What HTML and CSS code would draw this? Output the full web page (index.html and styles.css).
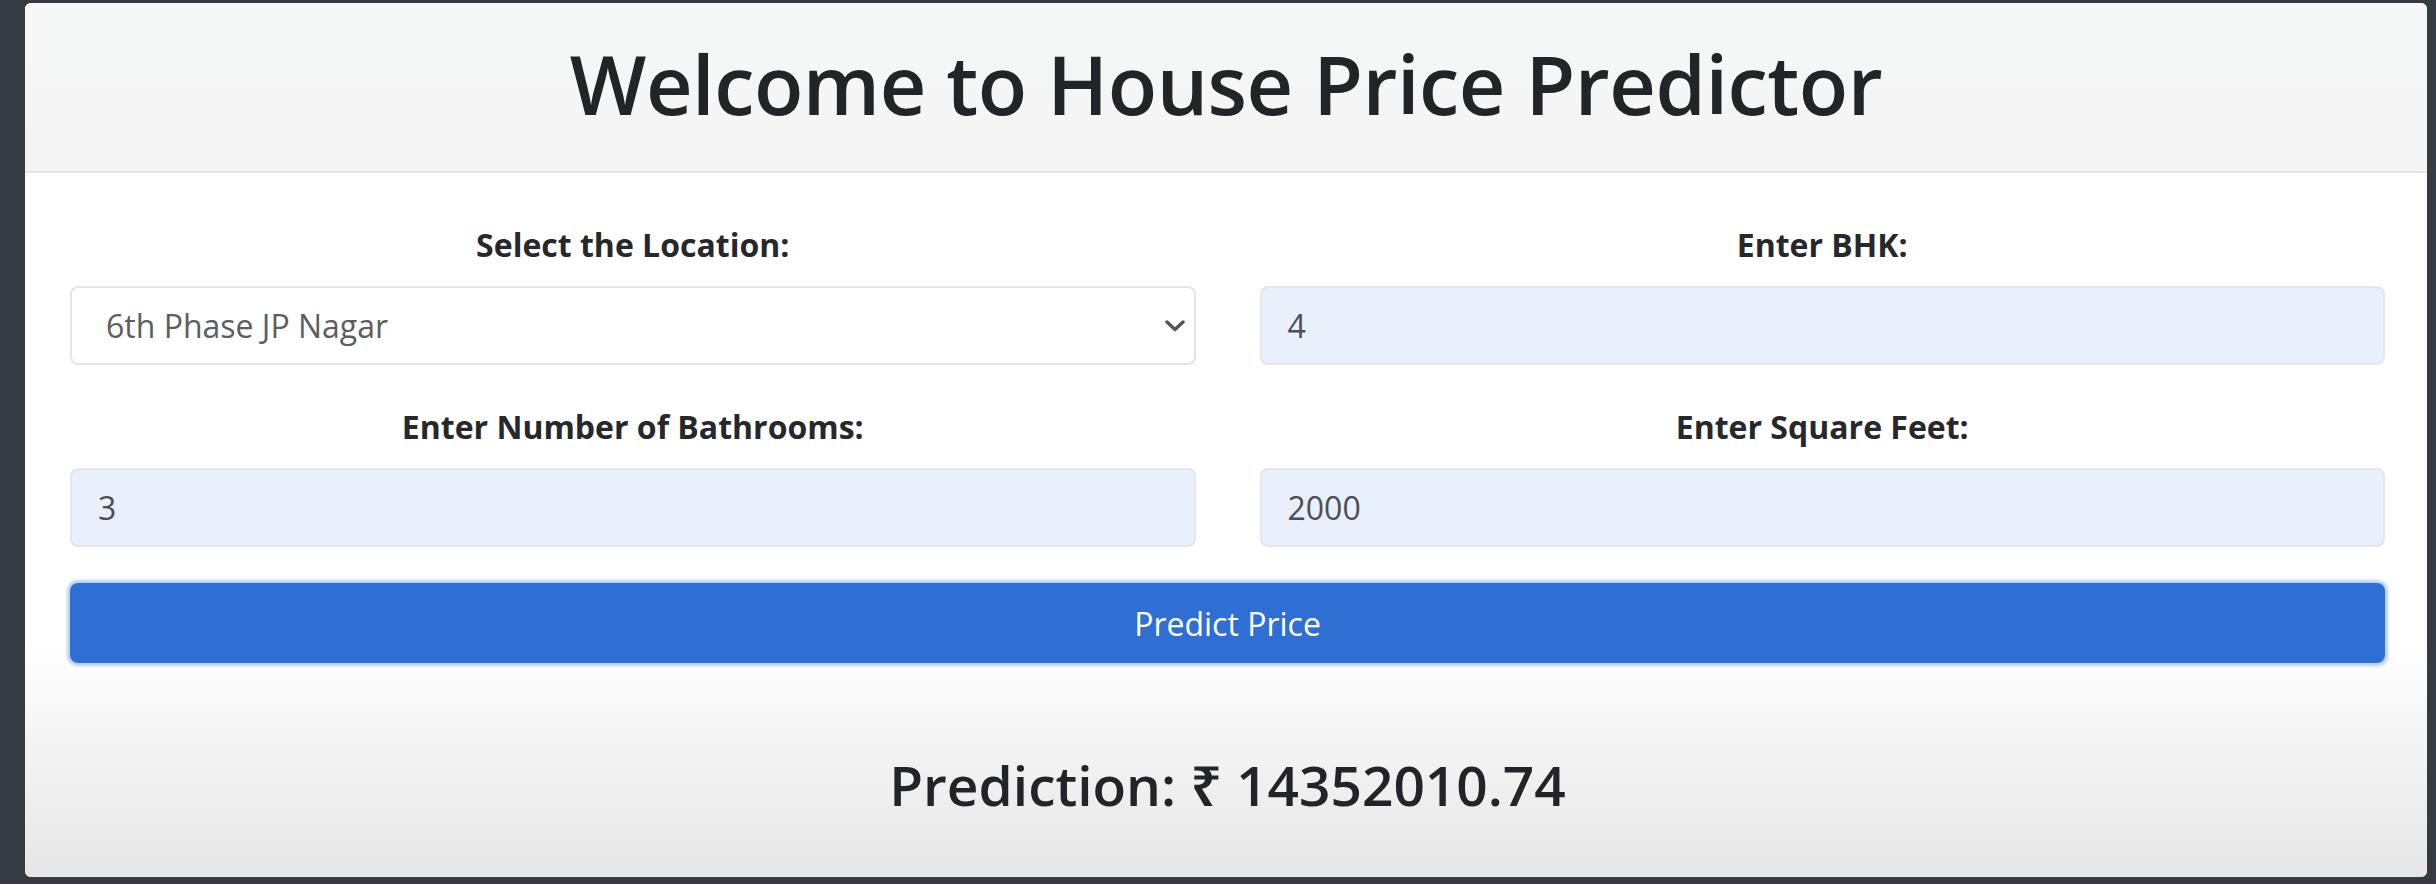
FILE: index.html
```html
<!DOCTYPE html>
<html lang="en">
<head>
<meta charset="utf-8">
<title>House Price Predictor</title>
<link rel="stylesheet" href="styles.css">
</head>
<body>
<div class="card">
  <div class="card-header">
    <h1 class="title">Welcome to House Price Predictor</h1>
  </div>
  <div class="card-body">
    <form class="form-grid">
      <div class="field">
        <label class="label">Select the Location:</label>
        <div class="select-wrap">
          <div class="control control-select">6th Phase JP Nagar</div>
          <svg class="chevron" width="20" height="12" viewBox="0 0 20 12"><path d="M2 2 L10 9.5 L18 2" fill="none" stroke="#555" stroke-width="3.4" stroke-linecap="round" stroke-linejoin="round"/></svg>
        </div>
      </div>
      <div class="field">
        <label class="label">Enter BHK:</label>
        <div class="control control-filled">4</div>
      </div>
      <div class="field">
        <label class="label">Enter Number of Bathrooms:</label>
        <div class="control control-filled">3</div>
      </div>
      <div class="field">
        <label class="label">Enter Square Feet:</label>
        <div class="control control-filled">2000</div>
      </div>
      <div class="btn">Predict Price</div>
    </form>
    <div class="result">
      <h2 class="prediction">Prediction: ₹ 14352010.74</h2>
    </div>
  </div>
</div>
</body>
</html>
```

FILE: styles.css
```css
html, body {
  margin: 0;
  padding: 0;
}
body {
  background: #353b41;
  width: 2436px;
  height: 884px;
  overflow: hidden;
  font-family: "Open Sans", "Noto Sans", "DejaVu Sans", sans-serif;
  color: #222529;
}
.card {
  margin: 3px 9px 0 25px;
  width: 2402px;
  height: 874px;
  background: #ffffff;
  border-radius: 6px;
  overflow: hidden;
  display: flex;
  flex-direction: column;
  box-shadow: inset -24px 0 30px -22px rgba(0, 0, 0, 0.18);
}
.card-header {
  height: 168px;
  flex: none;
  background: linear-gradient(#f6f7f7, #f4f4f4);
  border-bottom: 2px solid #e4e4e4;
  display: flex;
  align-items: center;
  justify-content: center;
}
.title {
  margin: 0 0 8px 0;
  font-size: 81px;
  font-weight: 600;
  line-height: 1;
  color: #232427;
  letter-spacing: -0.5px;
}
.card-body {
  flex: 1;
  padding: 48px 42px 0 45px;
  background: linear-gradient(#ffffff 0, #ffffff 470px, #f5f5f5 560px, #e6e6e6 100%);
  display: flex;
  flex-direction: column;
}
.form-grid {
  display: grid;
  grid-template-columns: 1fr 1fr;
  column-gap: 64px;
  row-gap: 38px;
  margin: 0;
}
.field {
  display: flex;
  flex-direction: column;
}
.label {
  display: block;
  text-align: center;
  font-weight: 700;
  font-size: 32px;
  line-height: 48px;
  margin-bottom: 17px;
  color: #26282b;
}
.select-wrap {
  position: relative;
}
.control {
  box-sizing: border-box;
  height: 79px;
  border: 2px solid #e3e5e8;
  border-radius: 8px;
  padding: 0 26px;
  display: flex;
  align-items: center;
  font-size: 32px;
  color: #4a4f55;
}
.control-select {
  background: #ffffff;
  padding-left: 34px;
  color: #5a5e63;
}
.control-filled {
  background: #e9f0fc;
  border-color: #e1e6ef;
}
.chevron {
  position: absolute;
  right: 11px;
  top: 34px;
}
.btn {
  grid-column: 1 / -1;
  margin-top: -2px;
  height: 80px;
  box-sizing: border-box;
  border-radius: 8px;
  background: #2f6fd4;
  color: #ffffff;
  font-size: 32px;
  display: flex;
  align-items: center;
  justify-content: center;
  box-shadow: 0 0 3px 3px rgba(120, 170, 240, 0.55);
}
.result {
  display: flex;
  justify-content: center;
  padding-top: 82px;
}
.prediction {
  margin: 0;
  font-size: 55px;
  font-weight: 600;
  line-height: 80px;
  color: #232427;
}
```
